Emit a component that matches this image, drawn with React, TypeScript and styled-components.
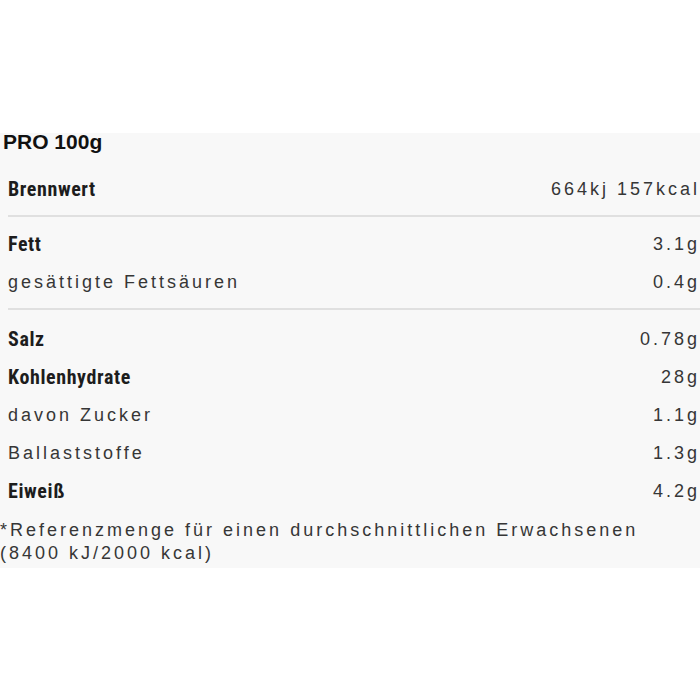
import React from "react";
import styled, { createGlobalStyle } from "styled-components";

const Global = createGlobalStyle`
  html, body { margin: 0; padding: 0; background: #ffffff; }
  body { width: 700px; height: 700px; overflow: hidden; }
`;

const Page = styled.div`
  padding-top: 133px;
`;

const Panel = styled.section`
  background: #f8f8f8;
  width: 700px;
  padding-bottom: 3px;
`;

const Title = styled.h2`
  margin: 0;
  padding: 0 0 0 3px;
  height: 30px;
  line-height: 17px;
  font-family: "Liberation Sans", Arial, sans-serif;
  font-weight: 700;
  font-size: 21px;
  color: #111;
`;

const Group = styled.div<{ $divider?: boolean; $top: number; $bottom: number }>`
  margin-left: 8px;
  padding-top: ${(p) => p.$top}px;
  padding-bottom: ${(p) => p.$bottom}px;
  border-bottom: ${(p) => (p.$divider ? "2px solid #e0e0e0" : "none")};
`;

const Row = styled.div<{ $h?: number }>`
  display: flex;
  justify-content: space-between;
  align-items: center;
  height: ${(p) => p.$h ?? 38}px;
  padding-right: 3px;
`;

const Label = styled.span<{ $bold?: boolean }>`
  font-family: ${(p) =>
    p.$bold
      ? `"Liberation Sans Narrow", "Roboto Condensed", "Liberation Sans", sans-serif`
      : `"Liberation Sans", Arial, sans-serif`};
  font-weight: ${(p) => (p.$bold ? 700 : 400)};
  font-size: ${(p) => (p.$bold ? 20 : 18)}px;
  letter-spacing: ${(p) => (p.$bold ? 0.6 : 3)}px;
  color: ${(p) => (p.$bold ? "#1d1d1d" : "#363636")};
`;

const Value = styled.span`
  font-family: "Liberation Sans", Arial, sans-serif;
  font-size: 18px;
  letter-spacing: 3px;
  margin-right: -3px;
  color: #363636;
`;

const Note = styled.p`
  margin: 0;
  padding: 9px 0 0 0;
  font-family: "Liberation Sans", Arial, sans-serif;
  font-size: 18px;
  line-height: 23px;
  letter-spacing: 3px;
  color: #363636;
`;

type Item = { label: string; value: string; bold?: boolean };

const groups: { items: Item[]; divider: boolean; top: number; bottom: number }[] = [
  { items: [{ label: "Brennwert", value: "664kj 157kcal", bold: true }], divider: true, top: 7, bottom: 7 },
  {
    items: [
      { label: "Fett", value: "3.1g", bold: true },
      { label: "gesättigte Fettsäuren", value: "0.4g" },
    ],
    divider: true,
    top: 8,
    bottom: 7,
  },
  {
    items: [
      { label: "Salz", value: "0.78g", bold: true },
      { label: "Kohlenhydrate", value: "28g", bold: true },
      { label: "davon Zucker", value: "1.1g" },
      { label: "Ballaststoffe", value: "1.3g" },
      { label: "Eiweiß", value: "4.2g", bold: true },
    ],
    divider: false,
    top: 10,
    bottom: 0,
  },
];

export default function App() {
  return (
    <Page>
      <Global />
      <Panel>
        <Title>PRO 100g</Title>
        {groups.map((g, i) => (
          <Group key={i} $divider={g.divider} $top={g.top} $bottom={g.bottom}>
            {g.items.map((it) => (
              <Row key={it.label}>
                <Label $bold={it.bold}>{it.label}</Label>
                <Value>{it.value}</Value>
              </Row>
            ))}
          </Group>
        ))}
        <Note>
          *Referenzmenge für einen durchschnittlichen Erwachsenen
          <br />
          (8400 kJ/2000 kcal)
        </Note>
      </Panel>
    </Page>
  );
}
